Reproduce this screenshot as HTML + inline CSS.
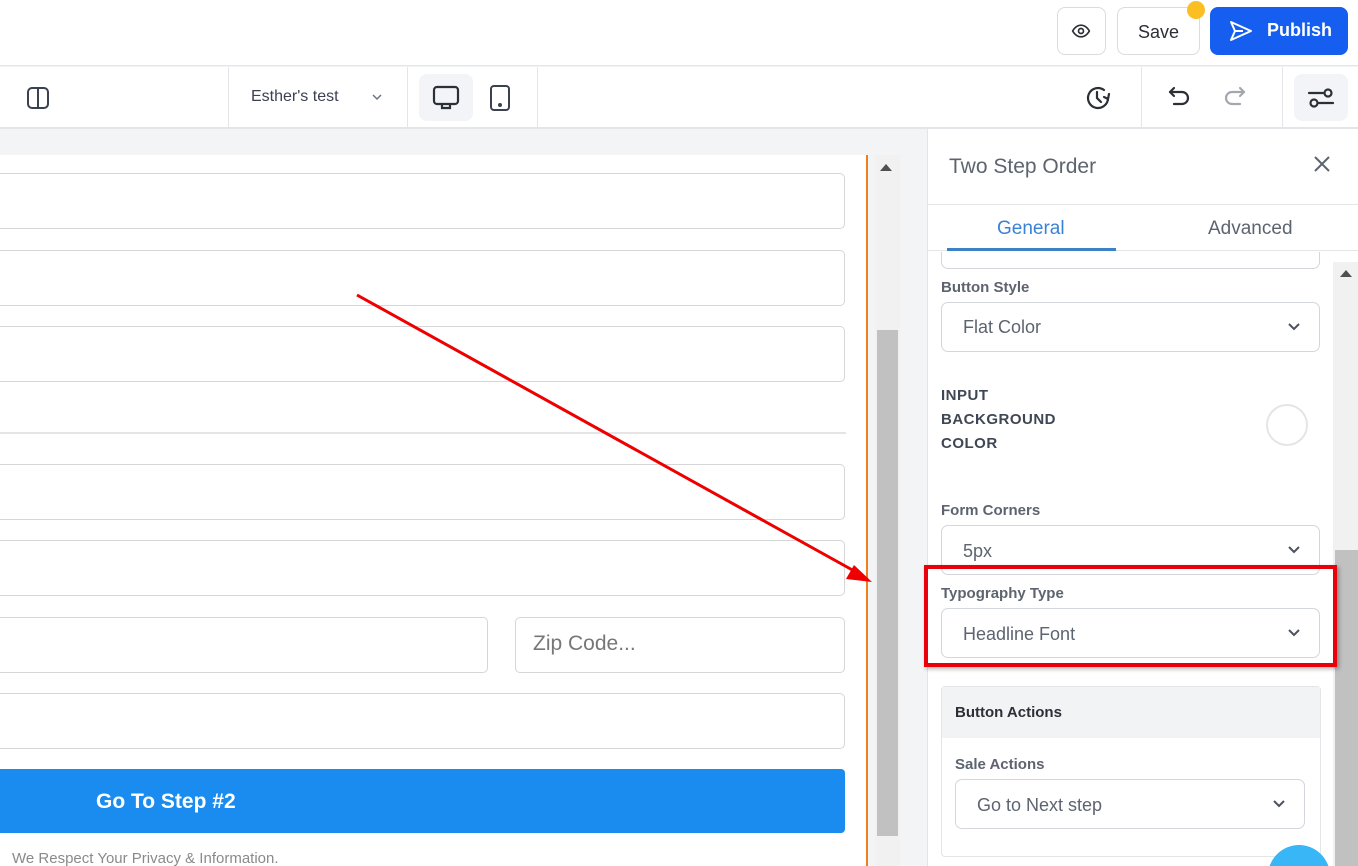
<!DOCTYPE html>
<html style="overflow:hidden"><head><meta charset="utf-8"><style>
*{box-sizing:border-box;margin:0;padding:0}
html,body{width:1358px;height:866px;overflow:hidden}
body{font-family:"Liberation Sans",sans-serif;background:#f3f4f6}
#w{position:relative;width:1358px;height:866px;overflow:hidden}
.abs{position:absolute}
.inp{position:absolute;background:#fff;border:1px solid #d6d6d6;border-radius:5px}
.lbl{position:absolute;left:941px;font-size:14px;font-weight:bold;color:#5d6470}
.sel{position:absolute;left:941px;width:379px;border:1px solid #d3d6db;border-radius:7px;background:#fff;font-size:18px;color:#5d6470;padding-left:21px}
.chev{position:absolute;right:18px;top:50%;margin-top:-5px}
</style></head><body><div id="w">
<div class="abs" style="left:0;top:0;width:1358px;height:66px;background:#fff;border-bottom:1px solid #e3e5e8"></div>
<div class="abs" style="left:1057px;top:7px;width:49px;height:48px;border:1px solid #d9dbdf;border-radius:8px;background:#fff"></div>
<svg class="abs" style="left:1070px;top:21px" width="22" height="20" viewBox="0 0 24 24" fill="none" stroke="#2b2f36" stroke-width="2"><path d="M2 12s3.5-7 10-7 10 7 10 7-3.5 7-10 7S2 12 2 12z"/><circle cx="12" cy="12" r="3"/></svg>
<div class="abs" style="left:1117px;top:7px;width:83px;height:48px;border:1px solid #d9dbdf;border-radius:8px;background:#fff;font-size:18px;color:#2b2f36;text-align:center;line-height:48px">Save</div>
<div class="abs" style="left:1187px;top:1px;width:18px;height:18px;border-radius:50%;background:#fbbf24"></div>
<div class="abs" style="left:1210px;top:7px;width:138px;height:48px;border-radius:8px;background:#155eef;color:#fff;font-size:18px;font-weight:bold;line-height:46px;padding-left:57px">Publish</div>
<svg class="abs" style="left:1228px;top:19px" width="26" height="24" viewBox="0 0 26 24" fill="none" stroke="#fff" stroke-width="2" stroke-linejoin="round"><path d="M3 3l20 9-20 9 4-9z M7 12h8"/></svg>
<div class="abs" style="left:0;top:67px;width:1358px;height:62px;background:#fff;border-bottom:2px solid #e3e5e8"></div>
<div class="abs" style="left:228px;top:67px;width:1px;height:61px;background:#e3e5e8"></div>
<div class="abs" style="left:407px;top:67px;width:1px;height:61px;background:#e3e5e8"></div>
<div class="abs" style="left:537px;top:67px;width:1px;height:61px;background:#e3e5e8"></div>
<div class="abs" style="left:1141px;top:67px;width:1px;height:61px;background:#e3e5e8"></div>
<div class="abs" style="left:1282px;top:67px;width:1px;height:61px;background:#e3e5e8"></div>
<svg class="abs" style="left:26px;top:86px" width="24" height="24" viewBox="0 0 24 24" fill="none" stroke="#3a4150" stroke-width="2"><rect x="2" y="2" width="20" height="20" rx="4"/><path d="M12 2v20"/></svg>
<div class="abs" style="left:251px;top:88px;font-size:16px;color:#3a4150">Esther's test</div>
<svg class="abs" style="left:371px;top:93px" width="12" height="8" viewBox="0 0 12 8" fill="none" stroke="#6b7280" stroke-width="1.5"><path d="M2 2l4 4 4-4"/></svg>
<div class="abs" style="left:419px;top:74px;width:54px;height:47px;border-radius:8px;background:#f2f4f7"></div>
<svg class="abs" style="left:432px;top:85px" width="28" height="26" viewBox="0 0 28 26" fill="none" stroke="#2b2f36" stroke-width="2.2"><rect x="2" y="2" width="24" height="17" rx="3"/><path d="M10 19v4h8v-4"/></svg>
<svg class="abs" style="left:488px;top:84px" width="24" height="28" viewBox="0 0 24 28" fill="none" stroke="#3a4150" stroke-width="2"><rect x="3" y="2" width="18" height="24" rx="3"/><circle cx="12" cy="21" r="1" fill="#3a4150"/></svg>
<svg class="abs" style="left:1084px;top:84px" width="28" height="28" viewBox="0 0 28 28" fill="none" stroke="#2b2f36" stroke-width="2.2" stroke-linecap="round"><path d="M24 14A10 10 0 1 1 20 6"/><path d="M13 8v6l4 4"/><path d="M25 10l-1 5-4-2"/></svg>
<svg class="abs" style="left:1166px;top:84px" width="28" height="26" viewBox="0 0 28 26" fill="none" stroke="#2b2f36" stroke-width="2.2" stroke-linecap="round" stroke-linejoin="round"><path d="M8 4L4 8l4 4"/><path d="M4 8h12a6 6 0 0 1 0 12H8"/></svg>
<svg class="abs" style="left:1220px;top:84px" width="28" height="26" viewBox="0 0 28 26" fill="none" stroke="#a3a8b0" stroke-width="2.2" stroke-linecap="round" stroke-linejoin="round"><path d="M20 4l4 4-4 4"/><path d="M24 8H12a6 6 0 0 0 0 12h8"/></svg>
<div class="abs" style="left:1294px;top:74px;width:54px;height:47px;border-radius:8px;background:#f2f4f7"></div>
<svg class="abs" style="left:1307px;top:86px" width="28" height="24" viewBox="0 0 28 24" fill="none" stroke="#2b2f36" stroke-width="2.2" stroke-linecap="round"><path d="M2 7h14"/><circle cx="21" cy="7" r="3.5"/><path d="M12 17h14"/><circle cx="7" cy="17" r="3.5"/></svg>
<div class="abs" style="left:0;top:155px;width:866px;height:711px;background:#fff"></div>
<div class="abs" style="left:866px;top:155px;width:2px;height:711px;background:#f07f1a"></div>
<div class="abs" style="left:875px;top:155px;width:25px;height:711px;background:#f1f1f1"></div>
<div class="abs" style="left:877px;top:330px;width:21px;height:506px;background:#c1c1c1"></div>
<div class="abs" style="left:880px;top:164px;width:0;height:0;border-left:6px solid transparent;border-right:6px solid transparent;border-bottom:7px solid #505050"></div>
<div class="inp" style="left:-10px;top:173px;width:855px;height:56px"></div>
<div class="inp" style="left:-10px;top:250px;width:855px;height:56px"></div>
<div class="inp" style="left:-10px;top:326px;width:855px;height:56px"></div>
<div class="abs" style="left:0;top:432px;width:846px;height:2px;background:#e5e5e5"></div>
<div class="inp" style="left:-10px;top:464px;width:855px;height:56px"></div>
<div class="inp" style="left:-10px;top:540px;width:855px;height:56px"></div>
<div class="inp" style="left:-10px;top:617px;width:498px;height:56px"></div>
<div class="inp" style="left:515px;top:617px;width:330px;height:56px;font-size:21px;color:#777;padding:14px 0 0 17px">Zip Code...</div>
<div class="inp" style="left:-10px;top:693px;width:855px;height:56px"></div>
<div class="abs" style="left:-10px;top:769px;width:855px;height:64px;background:#1a8cf0;border-radius:4px;color:#fff;font-size:21px;font-weight:bold;padding:21px 0 0 106px">Go To Step #2</div>
<div class="abs" style="left:12px;top:850px;font-size:15px;color:#8a8a8a">We Respect Your Privacy &amp; Information.</div>
<div class="abs" style="left:927px;top:129px;width:431px;height:737px;background:#fff;border-left:1px solid #e3e5e8"></div>
<div class="abs" style="left:949px;top:155px;font-size:21px;color:#5d6470">Two Step Order</div>
<svg class="abs" style="left:1312px;top:154px" width="20" height="20" viewBox="0 0 20 20" stroke="#5d6470" stroke-width="2"><path d="M3 3l14 14M17 3L3 17"/></svg>
<div class="abs" style="left:927px;top:204px;width:431px;height:1px;background:#e3e5e8"></div>
<div class="abs" style="left:997px;top:218px;font-size:19px;color:#3b82d6">General</div>
<div class="abs" style="left:1208px;top:218px;font-size:19px;color:#5d6470">Advanced</div>
<div class="abs" style="left:927px;top:250px;width:431px;height:1px;background:#e3e5e8"></div>
<div class="abs" style="left:947px;top:248px;width:169px;height:3px;background:#3b82c4"></div>
<div class="abs" style="left:1333px;top:262px;width:25px;height:604px;background:#f1f1f1"></div>
<div class="abs" style="left:1335px;top:550px;width:23px;height:316px;background:#c1c1c1"></div>
<div class="abs" style="left:1340px;top:270px;width:0;height:0;border-left:6px solid transparent;border-right:6px solid transparent;border-bottom:7px solid #505050"></div>
<div class="abs" style="left:941px;top:252px;width:379px;height:17px;border:1px solid #d3d6db;border-top:none;border-radius:0 0 7px 7px"></div>
<div class="lbl" style="top:279px;font-size:15px">Button Style</div>
<div class="sel" style="top:302px;height:50px;line-height:48px">Flat Color<svg class="chev" width="14" height="10" viewBox="0 0 14 10" fill="none" stroke="#4b5260" stroke-width="2"><path d="M2 2l5 5 5-5"/></svg></div>
<div class="abs" style="left:941px;top:384px;font-size:15px;font-weight:bold;color:#3f4654;line-height:24px;letter-spacing:0.5px">INPUT<br>BACKGROUND<br>COLOR</div>
<div class="abs" style="left:1266px;top:404px;width:42px;height:42px;border-radius:50%;border:2px solid #e3e5e8"></div>
<div class="lbl" style="top:502px;font-size:15px">Form Corners</div>
<div class="sel" style="top:525px;height:50px;line-height:50px">5px<svg class="chev" width="14" height="10" viewBox="0 0 14 10" fill="none" stroke="#4b5260" stroke-width="2"><path d="M2 2l5 5 5-5"/></svg></div>
<div class="abs" style="left:924px;top:565px;width:413px;height:102px;border:4px solid #e8000b;box-shadow:2px 2px 4px rgba(0,0,0,.3)"></div>
<div class="lbl" style="top:585px;font-size:15px">Typography Type</div>
<div class="sel" style="top:608px;height:50px;line-height:50px">Headline Font<svg class="chev" width="14" height="10" viewBox="0 0 14 10" fill="none" stroke="#4b5260" stroke-width="2"><path d="M2 2l5 5 5-5"/></svg></div>
<div class="abs" style="left:941px;top:686px;width:380px;height:171px;border:1px solid #e3e5e8;border-radius:4px;background:#fff"></div>
<div class="abs" style="left:942px;top:687px;width:378px;height:51px;background:#f2f3f5;font-size:15px;font-weight:bold;color:#2b2f36;padding:17px 0 0 13px">Button Actions</div>
<div class="lbl" style="left:955px;top:756px;font-size:15px">Sale Actions</div>
<div class="sel" style="left:955px;top:779px;width:350px;height:50px;line-height:50px">Go to Next step<svg class="chev" width="14" height="10" viewBox="0 0 14 10" fill="none" stroke="#4b5260" stroke-width="2"><path d="M2 2l5 5 5-5"/></svg></div>
<div class="abs" style="left:1268px;top:845px;width:62px;height:62px;border-radius:50%;background:#38b6f5"></div>
<svg class="abs" style="left:0;top:0" width="1358" height="866"><line x1="357" y1="295" x2="856" y2="572" stroke="#e00" stroke-width="3"/><path d="M872 582L846 579 854 565z" fill="#e00"/></svg>
</div></body></html>
